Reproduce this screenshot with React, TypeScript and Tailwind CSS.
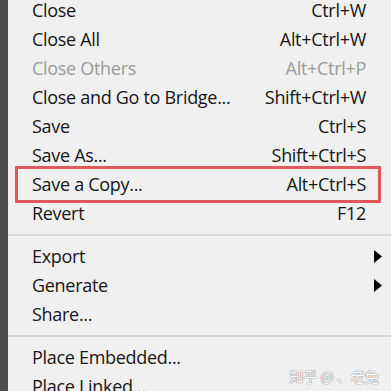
import { FC } from 'react'

type Item = {
  label: string
  keys?: string
  disabled?: boolean
  submenu?: boolean
  marked?: boolean
}

const groups: Item[][] = [
  [
    { label: 'Close', keys: 'Ctrl+W' },
    { label: 'Close All', keys: 'Alt+Ctrl+W' },
    { label: 'Close Others', keys: 'Alt+Ctrl+P', disabled: true },
    { label: 'Close and Go to Bridge...', keys: 'Shift+Ctrl+W' },
    { label: 'Save', keys: 'Ctrl+S' },
    { label: 'Save As...', keys: 'Shift+Ctrl+S' },
    { label: 'Save a Copy...', keys: 'Alt+Ctrl+S', marked: true },
    { label: 'Revert', keys: 'F12' },
  ],
  [
    { label: 'Export', submenu: true },
    { label: 'Generate', submenu: true },
    { label: 'Share...' },
  ],
  [{ label: 'Place Embedded...' }, { label: 'Place Linked...' }],
]

const Row: FC<{ item: Item }> = ({ item }) => (
  <div
    className={`relative flex h-[29px] items-center justify-between pl-[24px] pr-[25px] ${
      item.disabled ? 'text-[#9b9b9b]' : 'text-[#161616]'
    }`}
  >
    {item.marked && (
      <div className="pointer-events-none absolute -top-[4px] -bottom-[4px] left-[7px] right-[10px] border-[3px] border-[#e0575c]" />
    )}
    <span>{item.label}</span>
    {item.keys && <span>{item.keys}</span>}
    {item.submenu && (
      <svg width="8" height="13" viewBox="0 0 8 13" className="-mr-[16px]">
        <path d="M0 0 L8 6.5 L0 13 Z" fill="#000" />
      </svg>
    )}
  </div>
)

export default function App() {
  return (
    <div className="flex h-[391px] w-[391px] overflow-hidden bg-[#f0f0f0] font-['Open_Sans',sans-serif] text-[18px] tracking-[-0.3px]">
      <div className="w-[8px] shrink-0 bg-[#4d4d4d]" />
      <div className="relative flex-1">
        <div className="-mt-[4px]">
          {groups.map((g, i) => (
            <div key={i}>
              {i > 0 && (
                <div className="flex h-[14px] items-center">
                  <div className="h-[2px] w-full bg-[#d6d6d6]" />
                </div>
              )}
              {g.map((item) => (
                <Row key={item.label} item={item} />
              ))}
            </div>
          ))}
        </div>
        <div className="absolute bottom-[4px] right-[12px] font-['Noto_Sans_CJK_SC',sans-serif] text-[14px] tracking-normal text-white [text-shadow:0_0_1px_#777,0_0_1px_#777]">
          知乎 @ 、老兔
        </div>
      </div>
    </div>
  )
}
